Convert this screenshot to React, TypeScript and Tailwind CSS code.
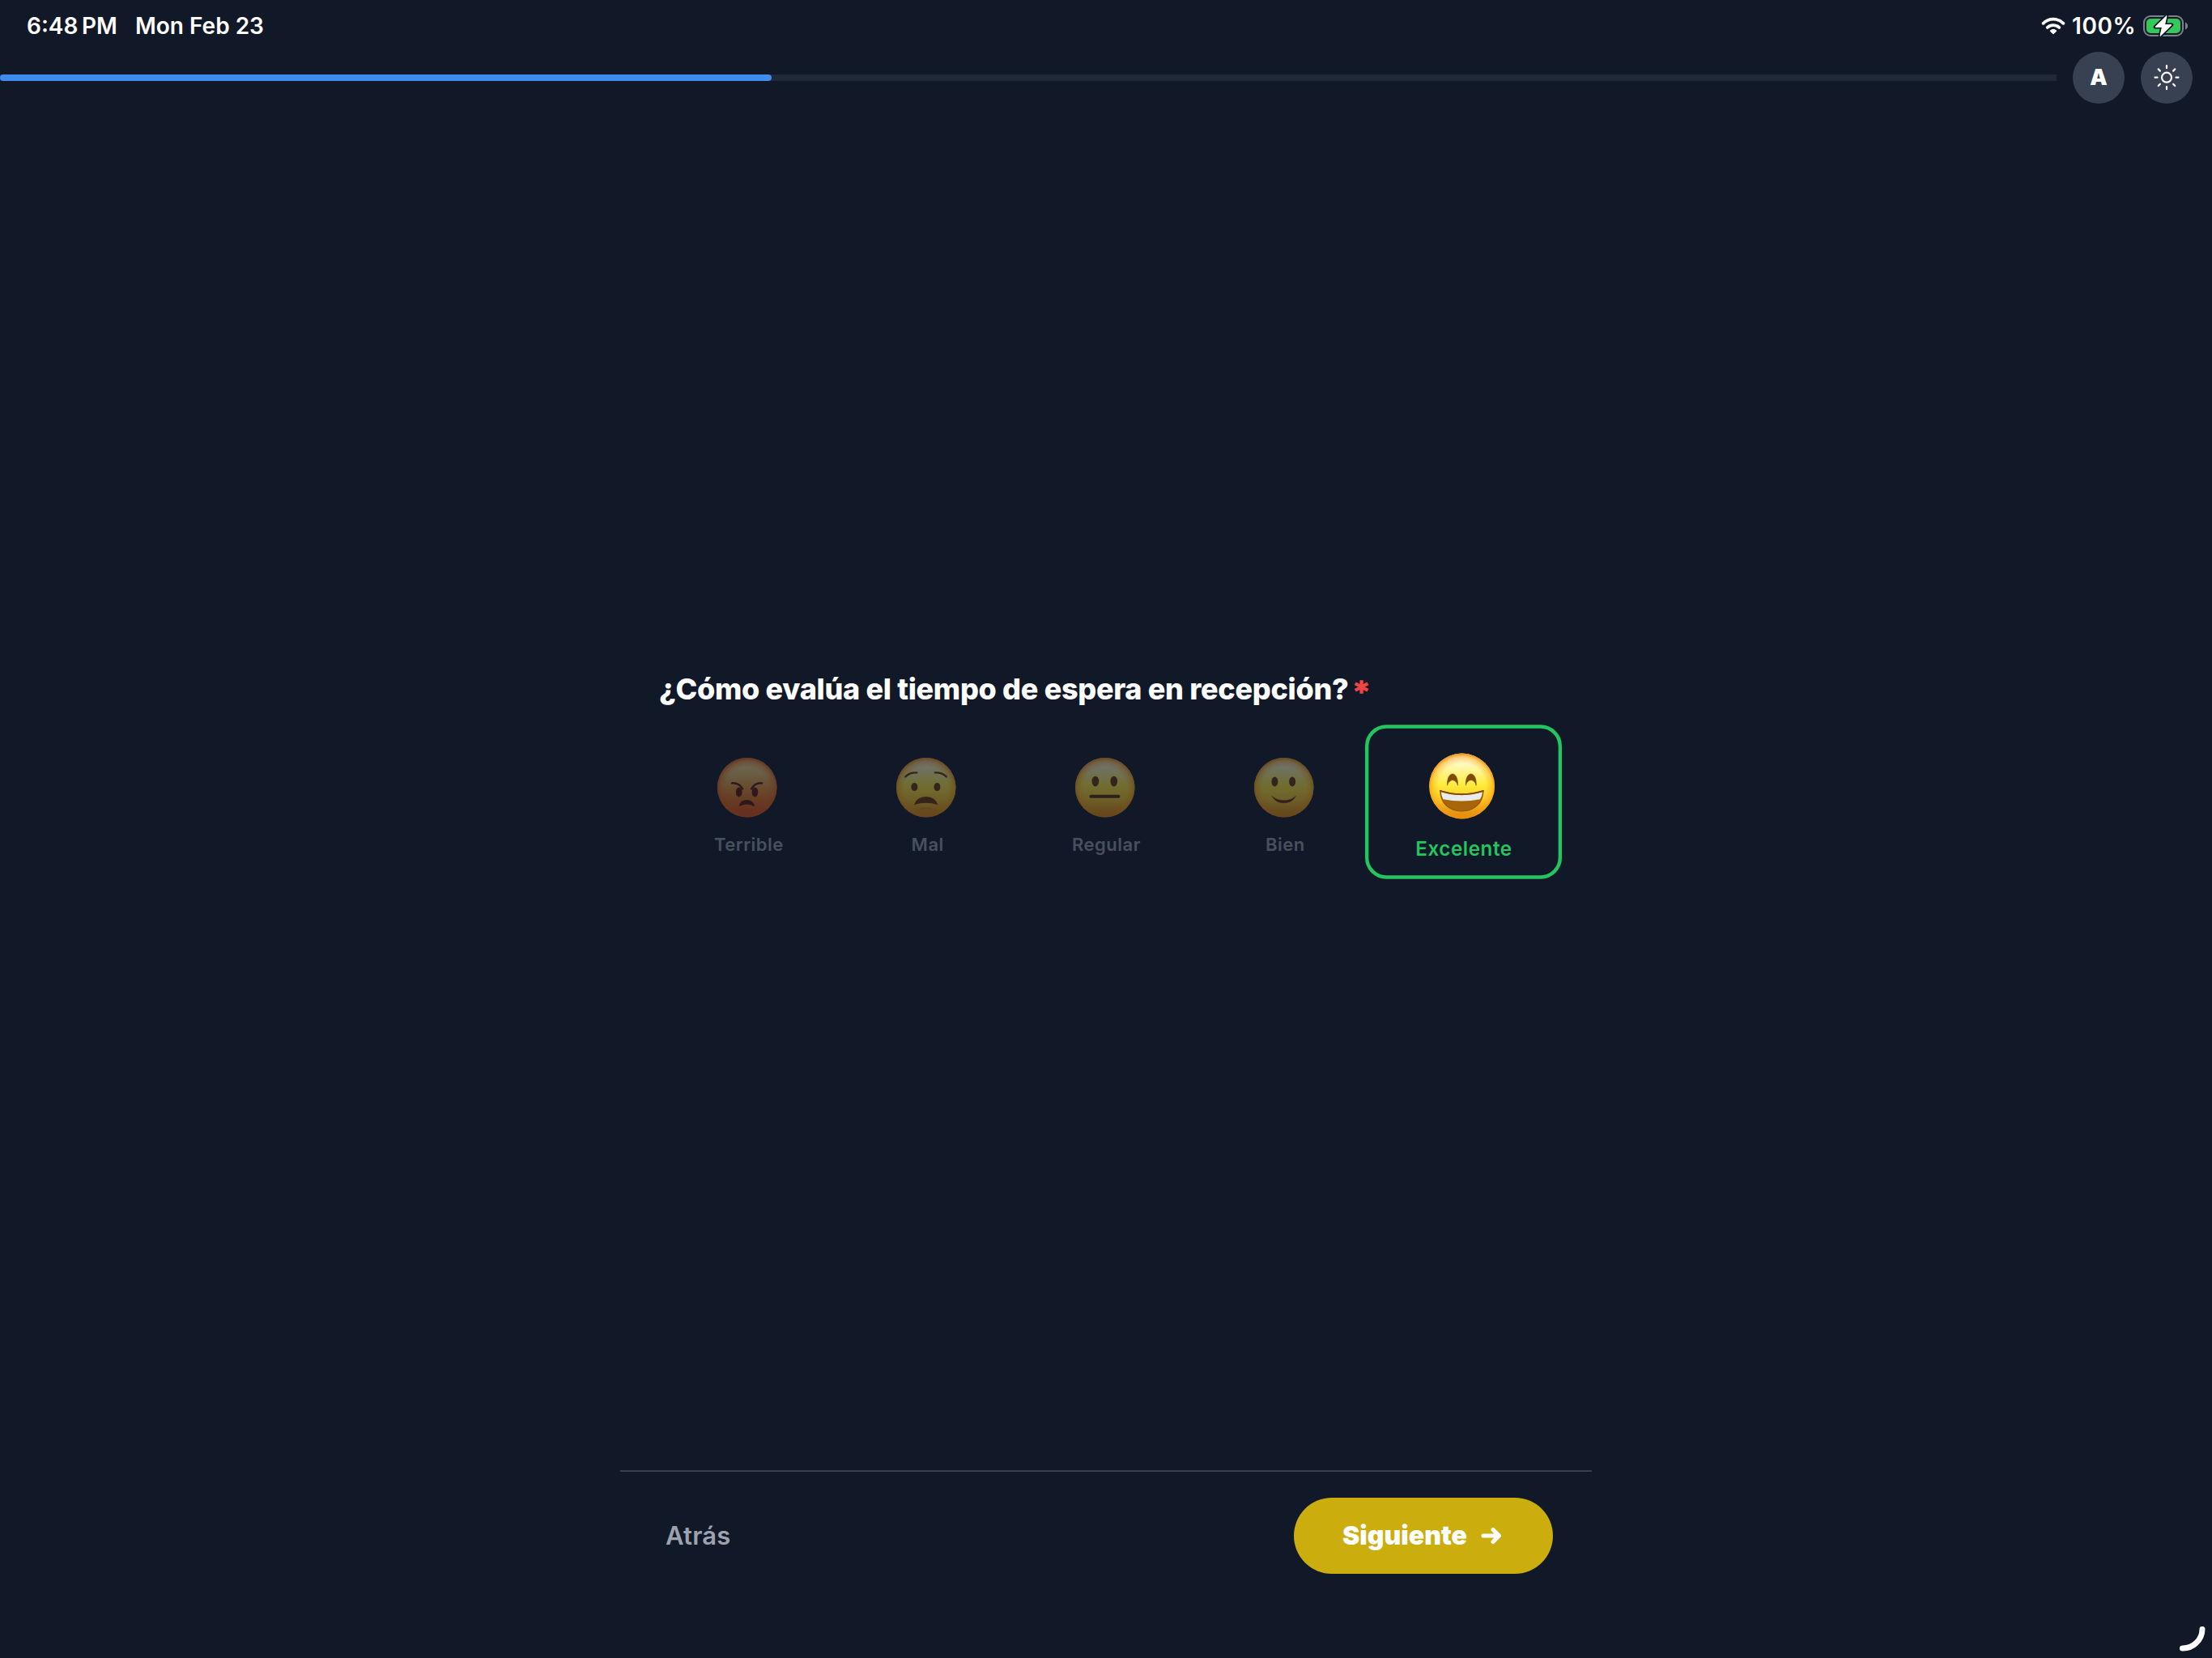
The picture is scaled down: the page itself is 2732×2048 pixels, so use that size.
import type { ReactNode } from 'react';

type Mood = 'terrible' | 'mal' | 'regular' | 'bien' | 'excelente';

const options: { id: Mood; label: string }[] = [
    { id: 'terrible', label: 'Terrible' },
    { id: 'mal', label: 'Mal' },
    { id: 'regular', label: 'Regular' },
    { id: 'bien', label: 'Bien' },
    { id: 'excelente', label: 'Excelente' }
];

const features: Record<Mood, ReactNode> = {
    terrible: (
        <>
            <g fill="#5c1a10">
                <ellipse cx="80" cy="127" rx="11.5" ry="18" />
                <ellipse cx="139" cy="127" rx="11.5" ry="18" />
                <path d="M80 180Q84 156 108.500 156Q133 156 138 180Q108 164 80 180Z" />
            </g>
            <path
                d="M54 94Q80 92 93 115M165 94Q139 92 126 115"
                fill="none"
                stroke="#5c1a10"
                strokeWidth="7.500"
                strokeLinecap="round"
            />
        </>
    ),
    mal: (
        <>
            <g fill="#69380b">
                <ellipse cx="67" cy="108" rx="12" ry="15" />
                <ellipse cx="151" cy="108" rx="12" ry="15" />
                <path d="M66 174Q76 144 110 144Q144 144 153 174Q110 160 66 174Z" />
            </g>
            <path
                d="M34 70Q50 53 76 55M185 70Q169 53 143 55"
                fill="none"
                stroke="#69380b"
                strokeWidth="7"
                strokeLinecap="round"
            />
            <path
                d="M90 190Q110 182 130 190"
                fill="none"
                stroke="#c96f12"
                strokeWidth="4"
                strokeLinecap="round"
                opacity="0.5"
            />
        </>
    ),
    regular: (
        <>
            <g fill="#69380b">
                <ellipse cx="74.500" cy="87" rx="13" ry="19" />
                <ellipse cx="143" cy="87" rx="13" ry="19" />
            </g>
            <path
                d="M58 143H160"
                stroke="#5b2c0a"
                strokeWidth="12"
                strokeLinecap="round"
            />
        </>
    ),
    bien: (
        <>
            <g fill="#69380b">
                <ellipse cx="76" cy="88" rx="12" ry="18" />
                <ellipse cx="141" cy="88" rx="12" ry="18" />
            </g>
            <path
                d="M66 142Q84 158 110 158Q136 158 154 142Q140 167 110 167Q80 167 66 142Z"
                fill="#5b2c0a"
                stroke="#5b2c0a"
                strokeWidth="1.500"
                strokeLinejoin="round"
            />
        </>
    ),
    excelente: (
        <>
            <path
                d="M61 108C58 56 99 56 96 108C90 84 67 84 61 108ZM123 108C120 56 161 56 158 108C152 84 129 84 123 108Z"
                fill="#7f4a02"
                stroke="#7f4a02"
                strokeWidth="1.500"
                strokeLinejoin="round"
            />
            <path
                d="M37 126Q109 149 182 126C181 166 153 194 109 194C65 194 38 166 37 126Z"
                fill="#a76608"
                stroke="#8f5603"
                strokeWidth="3"
                strokeLinejoin="round"
            />
            <path
                d="M40 130Q109 151 179 130Q178 145 171 154Q109 167 47 154Q41 145 40 130Z"
                fill="#e9eaec"
            />
            <path
                d="M37 126Q109 149 182 126"
                fill="none"
                stroke="#7f4a02"
                strokeWidth="4.500"
                strokeLinecap="round"
            />
        </>
    )
};

const Face = ({ mood }: { mood: Mood }) => {
    const angry = mood === 'terrible';

    return (
        <svg
            viewBox="0 0 220 220"
            className="-ml-[3px] size-[73.5px] shrink-0 overflow-visible"
            aria-hidden="true"
        >
            <defs>
                <linearGradient id={`${mood}-base`} x1="0" y1="0" x2="0" y2="1">
                    <stop
                        offset="0.05"
                        stopColor={angry ? '#f5dc8a' : '#fffbe6'}
                    />
                    <stop
                        offset="0.25"
                        stopColor={angry ? '#f0cc78' : '#fff69a'}
                    />
                    <stop
                        offset="0.48"
                        stopColor={angry ? '#ec9c40' : '#ffec3c'}
                    />
                    <stop
                        offset="0.7"
                        stopColor={angry ? '#e87420' : '#fcc928'}
                    />
                    <stop offset="1" stopColor={angry ? '#e0440c' : '#d67c0a'} />
                </linearGradient>
                <radialGradient id={`${mood}-rim`} cx="0.5" cy="0.52" r="0.51">
                    <stop
                        offset="0.72"
                        stopColor={angry ? '#f06a1a' : '#ff9b0a'}
                        stopOpacity="0"
                    />
                    <stop
                        offset="0.9"
                        stopColor={angry ? '#ec661a' : '#fba00f'}
                        stopOpacity="0.45"
                    />
                    <stop
                        offset="1"
                        stopColor={angry ? '#e65a12' : '#f08e04'}
                        stopOpacity="0.9"
                    />
                </radialGradient>
            </defs>
            <circle cx="110" cy="110" r="110" fill={`url(#${mood}-base)`} />
            <circle cx="110" cy="110" r="110" fill={`url(#${mood}-rim)`} />
            {features[mood]}
        </svg>
    );
};

const RatingOption = ({
    label,
    mood,
    selected
}: {
    label: string;
    mood: Mood;
    selected: boolean;
}) => (
    <button
        type="button"
        aria-pressed={selected}
        className={`flex h-[172.7px] flex-1 flex-col items-center rounded-[24px] border-[4px] pt-[28px] ${
            selected
                ? 'scale-110 border-[#22C55E] text-[#22C55E]'
                : 'border-transparent text-[#9CA3AF] opacity-40'
        }`}
    >
        <Face mood={mood} />
        <span className="ml-px mt-[19px] text-[22px] font-[570] leading-[28px] tracking-[0.5px]">
            {label}
        </span>
    </button>
);

const StatusBar = () => (
    <div className="flex h-16 items-center justify-between pl-[33px] pr-[29px] text-[28px] font-[600]">
        <div className="flex gap-[22px]">
            <span>6:48&#8198;PM</span>
            <span>Mon Feb 23</span>
        </div>
        <div className="flex items-center">
            <svg
                viewBox="0 0 30 22"
                className="mr-[8px] h-[22px] w-[30px]"
                aria-hidden="true"
            >
                <g
                    fill="none"
                    stroke="#fff"
                    strokeWidth="3.800"
                    strokeLinecap="round"
                >
                    <path d="M2.600 7.800A17.600 17.600 0 0 1 27.400 7.800" />
                    <path d="M7.800 12.900A10.600 10.600 0 0 1 22.200 12.900" />
                </g>
                <path
                    d="M11 17.200Q15 13.500 19 17.200L15.600 20.600Q15 21 14.400 20.600Z"
                    fill="#fff"
                    stroke="#fff"
                    strokeLinejoin="round"
                />
            </svg>
            <span className="tracking-[0.5px]">100%</span>
            <svg
                viewBox="0 0 56 28"
                className="ml-[9px] h-[28px] w-[56px]"
                aria-hidden="true"
            >
                <rect
                    x="1"
                    y="2"
                    width="48"
                    height="24"
                    rx="8"
                    fill="none"
                    stroke="#7d828c"
                    strokeWidth="2"
                />
                <path d="M52 9.500Q55 11 55 14Q55 17 52 18.500Z" fill="#7d828c" />
                <rect x="4" y="5" width="42" height="18" rx="5" fill="#34C759" />
                <path
                    d="M29 1.500L15 15.300H23.500L21 26.500L35 12.700H26.500Z"
                    fill="#fff"
                    stroke="#111827"
                    strokeWidth="4.500"
                    strokeLinejoin="round"
                    paintOrder="stroke"
                />
                <path
                    d="M29 1.500L15 15.300H23.500L21 26.500L35 12.700H26.500Z"
                    fill="#fff"
                    stroke="#fff"
                    strokeWidth="1"
                    strokeLinejoin="round"
                />
            </svg>
        </div>
    </div>
);

export default function App() {
    return (
        <div className="relative flex h-[2048px] w-[2732px] flex-col overflow-hidden bg-[#111827] font-['Inter','Liberation_Sans',sans-serif] text-white">
            <StatusBar />

            <header className="flex h-16 items-center gap-5 pr-6">
                <div className="h-2 flex-1 bg-[#1F2937]">
                    <div className="h-full w-[37.5%] rounded-full bg-[#3F8BEE]" />
                </div>
                <button
                    type="button"
                    className="grid size-16 place-items-center rounded-full bg-[#374151] text-[27px] font-[900]"
                >
                    A
                </button>
                <button
                    type="button"
                    aria-label="Tema"
                    className="grid size-16 place-items-center rounded-full bg-[#374151]"
                >
                    <svg
                        viewBox="0 0 32 32"
                        className="size-8"
                        fill="none"
                        stroke="#fff"
                        strokeWidth="2.200"
                        strokeLinecap="round"
                    >
                        <circle cx="16" cy="15.700" r="6" />
                        <path d="M16 1.200V4.200M16 27.200V30.200M1.500 15.700H4.500M27.500 15.700H30.500M5.700 5.400L7.900 7.600M24.100 23.800L26.300 26M5.700 26L7.900 23.800M24.100 7.600L26.300 5.400" />
                    </svg>
                </button>
            </header>

            <main className="mx-auto flex w-[1200px] flex-1 flex-col px-12 pt-[699px]">
                <h1 className="whitespace-nowrap text-[36px] font-[800] leading-[48px] tracking-[-0.31px]">
                    ¿Cómo evalúa el tiempo de espera en recepción?{' '}
                    <span className="font-['DejaVu_Sans',sans-serif] text-[32px] font-bold leading-none text-[#EF4444] [-webkit-text-stroke:1.5px_#EF4444]">
                        *
                    </span>
                </h1>
                <div className="mt-[29px] flex">
                    {options.map((option) => (
                        <RatingOption
                            key={option.id}
                            label={option.label}
                            mood={option.id}
                            selected={option.id === 'excelente'}
                        />
                    ))}
                </div>
            </main>

            <footer className="mx-auto flex h-[232px] w-[1200px] items-start justify-between border-t-2 border-[#374151] px-12 pt-8">
                <button
                    type="button"
                    className="h-[94px] pl-2 text-[31px] font-[620] tracking-[0.2px] text-[#9CA3AF]"
                >
                    Atrás
                </button>
                <button
                    type="button"
                    className="flex h-[94px] w-[320px] items-center rounded-full bg-[#CCAD0E] pl-[60px] text-[32px] font-[900]"
                >
                    <span>Siguiente</span>
                    <svg
                        viewBox="0 0 26 22"
                        className="ml-[17px] h-[22px] w-[26px]"
                        fill="none"
                        stroke="#fff"
                        strokeWidth="5"
                        strokeLinecap="round"
                        strokeLinejoin="round"
                        aria-hidden="true"
                    >
                        <path d="M3 11H22M15 3.500L22.500 11L15 18.500" />
                    </svg>
                </button>
            </footer>

            {/* pointer resting in the lower right corner */}
            <svg
                viewBox="0 0 40 40"
                className="absolute bottom-0 right-0 size-10"
                aria-hidden="true"
            >
                <path
                    d="M28 4.500A24 24 0 0 1 3.500 28"
                    fill="none"
                    stroke="#fff"
                    strokeWidth="7"
                    strokeLinecap="round"
                />
            </svg>
        </div>
    );
}
